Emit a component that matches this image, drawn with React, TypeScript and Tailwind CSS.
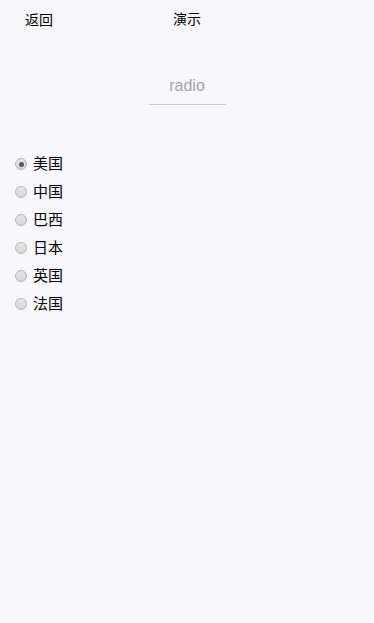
import React, { useState } from 'react';

const countries = ['美国', '中国', '巴西', '日本', '英国', '法国'];

const font = { fontFamily: '"Liberation Sans", "Noto Sans CJK SC", sans-serif' };

export default function App() {
  const [selected, setSelected] = useState('美国');

  return (
    <div className="min-h-screen w-full bg-[#f9f7fe] text-black" style={font}>
      {/* header */}
      <div className="relative flex h-[40px] items-center justify-center text-[14px]">
        <button className="absolute left-[25px] top-[11px] leading-[18px]">返回</button>
        <span className="mt-[-2px] leading-[18px]">演示</span>
      </div>

      {/* title input */}
      <div className="mt-[37px] flex justify-center">
        <input
          placeholder="radio"
          className="w-[77px] border-b border-[#c8c8cc] bg-transparent pb-[9px] text-center text-[16px] leading-[18px] outline-none placeholder:text-[#a3a3a8]"
        />
      </div>

      {/* radio list */}
      <div className="mt-[45px] flex flex-col pl-[15px]">
        {countries.map((c) => {
          const on = c === selected;
          return (
            <label key={c} className="flex h-[28px] cursor-pointer items-center text-[15px]">
              <input
                type="radio"
                name="country"
                className="hidden"
                checked={on}
                onChange={() => setSelected(c)}
              />
              <span className="flex h-[12px] w-[12px] items-center justify-center rounded-full border border-[#b4b4b4] bg-gradient-to-b from-[#e6e6e6] to-[#d6d6d6]">
                {on && <span className="h-[5px] w-[5px] rounded-full bg-[#555]" />}
              </span>
              <span className="ml-[6px] leading-[18px]">{c}</span>
            </label>
          );
        })}
      </div>
    </div>
  );
}
